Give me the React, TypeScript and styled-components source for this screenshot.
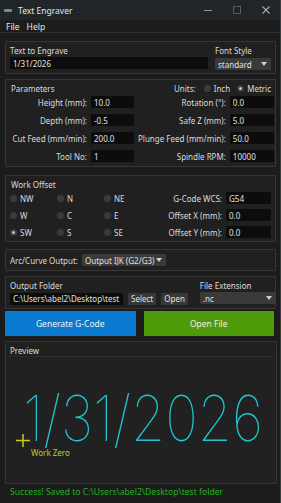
import React from 'react';
import styled, { createGlobalStyle } from 'styled-components';

const GlobalStyle = createGlobalStyle`
  html, body {
    margin: 0;
    padding: 0;
    background: #1a1a1a;
  }
  * {
    box-sizing: border-box;
  }
`;

const Window = styled.div`
  width: 281px;
  height: 503px;
  display: flex;
  flex-direction: column;
  background: #1c1c1c;
  border-right: 1px solid #3a3f42;
  font-family: 'Noto Sans', 'Open Sans', sans-serif;
  font-size: 8px;
  color: #dcdcdc;
  overflow: hidden;
`;

const TitleBar = styled.div`
  height: 20px;
  flex: none;
  display: flex;
  align-items: center;
  background: #1f2528;
  padding-left: 4px;
`;

const AppIcon = styled.div`
  width: 8px;
  height: 3px;
  border-radius: 1px;
  background: #6f8f8c;
  margin-right: 6px;
`;

const Title = styled.span`
  flex: 1;
  font-size: 8.5px;
  color: #e6e6e6;
`;

const WinButton = styled.div`
  width: 29px;
  height: 20px;
  display: flex;
  align-items: center;
  justify-content: center;
  color: #9a9a9a;
`;

const MenuBar = styled.div`
  height: 13px;
  flex: none;
  display: flex;
  align-items: center;
  gap: 7px;
  padding-left: 6px;
  font-size: 8.5px;
  color: #e6e6e6;
  border-bottom: 1px solid #2e2e2e;
`;

const Content = styled.div`
  flex: 1;
  display: flex;
  flex-direction: column;
  padding: 8px 4px 0 5px;
`;

const Frame = styled.div<{ $mt: number; $h: number }>`
  margin-top: ${p => p.$mt}px;
  height: ${p => p.$h}px;
  flex: none;
  border: 1px solid #363636;
  background: #202020;
  border-radius: 1px;
  padding: 3px 4px 0 3px;
`;

const Label = styled.div<{ $align?: string }>`
  text-align: ${p => p.$align || 'left'};
  white-space: nowrap;
  line-height: 11px;
`;

const Field = styled.input<{ $w?: number }>`
  width: ${p => (p.$w ? p.$w + 'px' : '100%')};
  height: 12px;
  border: none;
  outline: none;
  background: #0c0c0c;
  color: #e0e0e0;
  font-family: inherit;
  font-size: 8px;
  padding: 0 3px;
  margin: 0;
  border-radius: 1px;
`;

const Combo = styled.div<{ $w: number }>`
  width: ${p => p.$w}px;
  height: 12px;
  display: flex;
  align-items: center;
  justify-content: space-between;
  background: #3a3a3a;
  color: #e0e0e0;
  padding: 0 4px 0 3px;
  border-radius: 1px;
  white-space: nowrap;
`;

const Arrow = styled.span`
  width: 0;
  height: 0;
  border-left: 3px solid transparent;
  border-right: 3px solid transparent;
  border-top: 4px solid #cfcfcf;
`;

const SmallButton = styled.div`
  height: 12px;
  display: flex;
  align-items: center;
  padding: 0 3px;
  background: #373737;
  color: #e0e0e0;
  border-radius: 1px;
`;

const TextRow = styled.div`
  display: flex;
  justify-content: space-between;
  align-items: flex-start;
`;

const Column = styled.div<{ $gap: number }>`
  display: flex;
  flex-direction: column;
  gap: ${p => p.$gap}px;
`;

const ParamGrid = styled.div`
  display: grid;
  grid-template-columns: 75px 43px 1fr 44px;
  column-gap: 4px;
  row-gap: 6px;
  align-items: center;
  padding-left: 3px;
  margin-top: 2px;
`;

const HeaderRow = styled.div`
  display: flex;
  align-items: center;
  justify-content: space-between;
  height: 11px;
  padding-left: 2px;
`;

const Units = styled.div`
  display: flex;
  align-items: center;
  gap: 4px;
`;

const Radio = styled.span<{ $on?: boolean }>`
  display: inline-flex;
  align-items: center;
  justify-content: center;
  width: 7px;
  height: 7px;
  border-radius: 50%;
  background: #3b3b3b;
  margin-right: 3px;
  &::after {
    content: '';
    display: ${p => (p.$on ? 'block' : 'none')};
    width: 3px;
    height: 3px;
    border-radius: 50%;
    background: #c8c8c8;
  }
`;

const RadioItem = styled.div`
  display: flex;
  align-items: center;
  white-space: nowrap;
`;

const OffsetGrid = styled.div`
  display: grid;
  grid-template-columns: 47px 47px 47px 1fr 45px;
  row-gap: 5px;
  column-gap: 0;
  align-items: center;
  padding-left: 1px;
  margin-top: 2px;
`;

const RightLabel = styled(Label)`
  padding-right: 4px;
`;

const InlineRow = styled.div`
  display: flex;
  align-items: center;
  gap: 4px;
  height: 100%;
  padding-bottom: 3px;
`;

const OutputFrame = styled(Frame)`
  display: flex;
  padding-top: 3px;
`;

const Divider = styled.div`
  width: 1px;
  background: #363636;
  margin: -1px 6px 3px 6px;
`;

const ButtonRow = styled.div`
  display: flex;
  gap: 8px;
  margin-top: 2px;
  height: 25px;
  flex: none;
  padding-right: 2px;
`;

const BigButton = styled.div<{ $color: string }>`
  flex: 1;
  display: flex;
  align-items: center;
  justify-content: center;
  background: ${p => p.$color};
  color: #f0f0f0;
  font-size: 8.5px;
  border-radius: 1px;
`;

const PreviewFrame = styled(Frame)`
  display: flex;
  flex-direction: column;
  padding: 3px 1px 1px 2px;
  margin-right: -1px;
`;

const Canvas = styled.div`
  flex: 1;
  border-top: 1px solid #2c2c2c;
  background: #212121;
  overflow: hidden;
`;

const Status = styled.div`
  padding: 2px 0 0 5px;
  color: #22b322;
  font-size: 8.6px;
  white-space: nowrap;
`;

const params: [string, string, string, string][] = [
  ['Height (mm):', '10.0', 'Rotation (°):', '0.0'],
  ['Depth (mm):', '-0.5', 'Safe Z (mm):', '5.0'],
  ['Cut Feed (mm/min):', '200.0', 'Plunge Feed (mm/min):', '50.0'],
  ['Tool No:', '1', 'Spindle RPM:', '10000'],
];

const offsets: [string[], string, string][] = [
  [['NW', 'N', 'NE'], 'G-Code WCS:', 'G54'],
  [['W', 'C', 'E'], 'Offset X (mm):', '0.0'],
  [['SW', 'S', 'SE'], 'Offset Y (mm):', '0.0'],
];

export default function App() {
  return (
    <>
      <GlobalStyle />
      <Window>
        <TitleBar>
          <AppIcon />
          <Title>Text Engraver</Title>
          <WinButton>
            <svg width="10" height="10" viewBox="0 0 10 10">
              <path d="M1 5.5h8" stroke="#9a9a9a" strokeWidth="1" />
            </svg>
          </WinButton>
          <WinButton>
            <svg width="10" height="10" viewBox="0 0 10 10">
              <rect x="1.5" y="1.5" width="7" height="7" fill="none" stroke="#5a5a5a" strokeWidth="1" />
            </svg>
          </WinButton>
          <WinButton>
            <svg width="10" height="10" viewBox="0 0 10 10">
              <path d="M1.5 1.5l7 7M8.5 1.5l-7 7" stroke="#a8a8a8" strokeWidth="1.1" />
            </svg>
          </WinButton>
        </TitleBar>
        <MenuBar>
          <span>File</span>
          <span>Help</span>
        </MenuBar>
        <Content>
          <Frame $mt={0} $h={33}>
            <TextRow>
              <Column $gap={1} style={{ paddingLeft: 1 }}>
                <Label>Text to Engrave</Label>
                <Field $w={198} readOnly value="1/31/2026" />
              </Column>
              <Column $gap={2}>
                <Label>Font Style</Label>
                <Combo $w={56}>
                  standard <Arrow />
                </Combo>
              </Column>
            </TextRow>
          </Frame>

          <Frame $mt={5} $h={88}>
            <HeaderRow>
              <Label>Parameters</Label>
              <Units>
                <Label>Units:</Label>
                <RadioItem style={{ marginLeft: 4 }}>
                  <Radio />
                  Inch
                </RadioItem>
                <RadioItem style={{ marginLeft: 3 }}>
                  <Radio $on />
                  Metric
                </RadioItem>
              </Units>
            </HeaderRow>
            <ParamGrid>
              {params.map(([l1, v1, l2, v2]) => (
                <React.Fragment key={l1}>
                  <Label $align="right">{l1}</Label>
                  <Field readOnly value={v1} />
                  <Label $align="right">{l2}</Label>
                  <Field readOnly value={v2} />
                </React.Fragment>
              ))}
            </ParamGrid>
          </Frame>

          <Frame $mt={8} $h={67}>
            <Label style={{ paddingLeft: 2 }}>Work Offset</Label>
            <OffsetGrid>
              {offsets.map(([dirs, lab, val]) => (
                <React.Fragment key={lab}>
                  {dirs.map(d => (
                    <RadioItem key={d}>
                      <Radio $on={d === 'SW'} />
                      {d}
                    </RadioItem>
                  ))}
                  <RightLabel $align="right">{lab}</RightLabel>
                  <Field readOnly value={val} />
                </React.Fragment>
              ))}
            </OffsetGrid>
          </Frame>

          <Frame $mt={7} $h={22}>
            <InlineRow style={{ paddingLeft: 1 }}>
              <Label>Arc/Curve Output:</Label>
              <Combo $w={84}>
                Output IJK (G2/G3) <Arrow />
              </Combo>
            </InlineRow>
          </Frame>

          <OutputFrame $mt={5} $h={33}>
            <Column $gap={1} style={{ paddingLeft: 1 }}>
              <Label>Output Folder</Label>
              <InlineRow>
                <Field $w={113} readOnly value="C:\Users\abel2\Desktop\test" />
                <SmallButton style={{ marginLeft: 1 }}>Select</SmallButton>
                <SmallButton style={{ marginLeft: 1 }}>Open</SmallButton>
              </InlineRow>
            </Column>
            <Divider />
            <Column $gap={1} style={{ flex: 1 }}>
              <Label>File Extension</Label>
              <Combo $w={76}>
                .nc <Arrow />
              </Combo>
            </Column>
          </OutputFrame>

          <ButtonRow>
            <BigButton $color="#0b7ad1">Generate G-Code</BigButton>
            <BigButton $color="#4f9a08">Open File</BigButton>
          </ButtonRow>

          <PreviewFrame $mt={5} $h={143}>
            <Label style={{ paddingLeft: 2 }}>Preview</Label>
            <Canvas>
              <svg width="270" height="127">
                <text
                  x="15"
                  y="84"
                  textLength="240"
                  lengthAdjust="spacingAndGlyphs"
                  fill="#1fc6cf"
                  fontFamily="Inter, Roboto, sans-serif"
                  fontWeight="100"
                  fontSize="63"
                >
                  1/31/2026
                </text>
                <path d="M8 83.5h14M15 77v13" stroke="#caca22" strokeWidth="1.5" />
                <text x="23" y="99" fill="#caca22" fontFamily="'Noto Sans', sans-serif" fontSize="8">
                  Work Zero
                </text>
              </svg>
            </Canvas>
          </PreviewFrame>
          <Status>Success! Saved to C:\Users\abel2\Desktop\test folder</Status>
        </Content>
      </Window>
    </>
  );
}
